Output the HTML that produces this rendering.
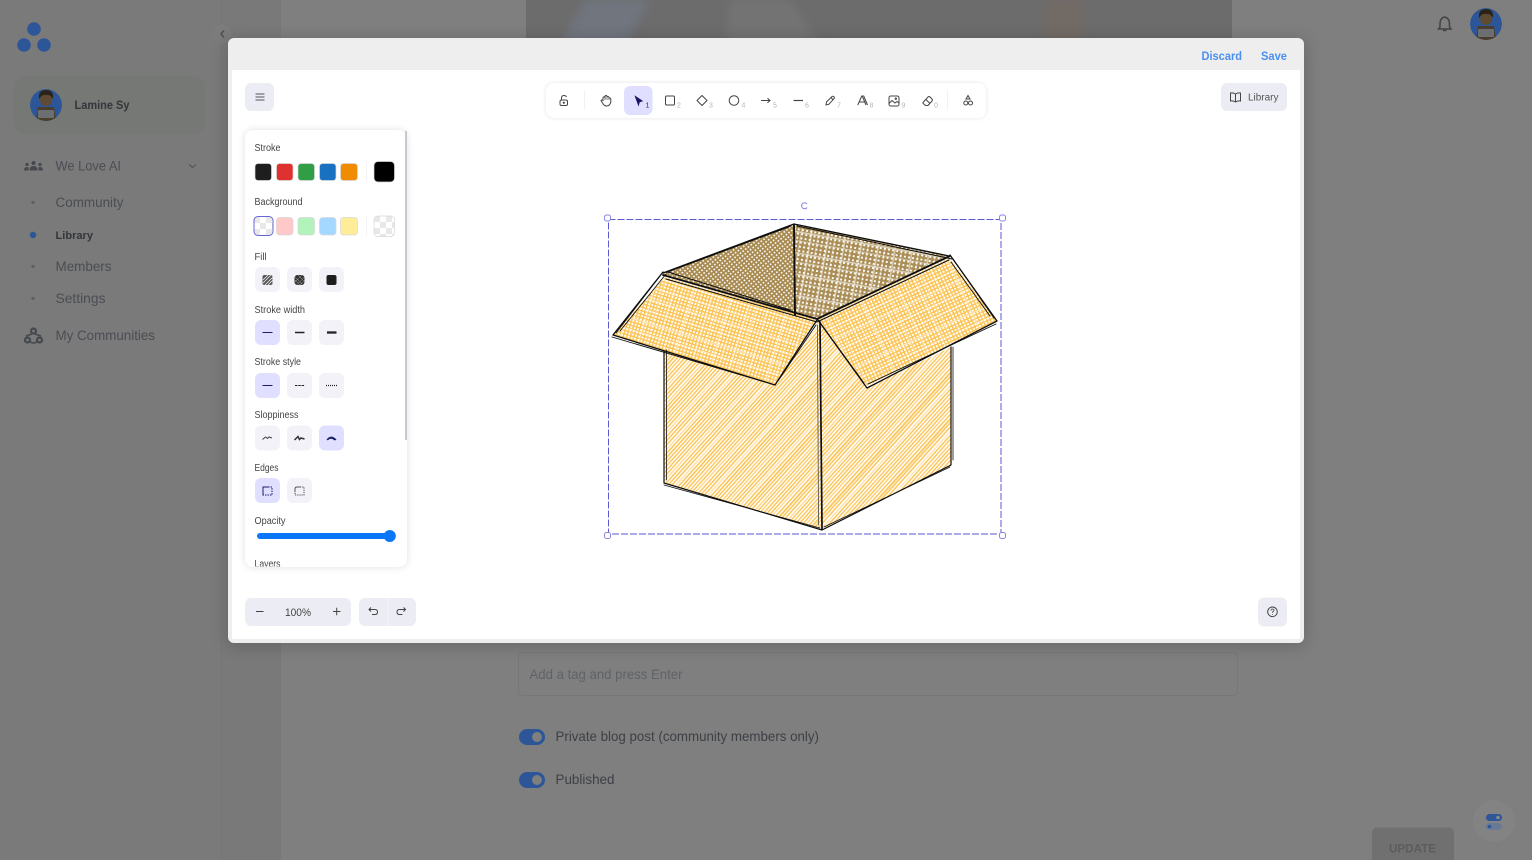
<!DOCTYPE html>
<html lang="en">
<head>
<meta charset="utf-8">
<title>Library</title>
<style>
html,body{margin:0;padding:0;width:1532px;height:860px;overflow:hidden;background:#7f7f7f}
svg{display:block;position:absolute;left:0;top:0}
text{font-family:"Liberation Sans",sans-serif}
</style>
</head>
<body>
<svg width="1532" height="860" viewBox="0 0 1532 860" xmlns="http://www.w3.org/2000/svg">
<defs>
<filter id="b4" x="-50%" y="-50%" width="200%" height="200%"><feGaussianBlur stdDeviation="4"/></filter>
<filter id="b8" x="-5%" y="-5%" width="110%" height="110%"><feGaussianBlur stdDeviation="8"/></filter>
<filter id="b2" x="-5%" y="-30%" width="110%" height="160%"><feGaussianBlur stdDeviation="2.5"/></filter>
<pattern id="hSide" width="2.8" height="2.8" patternUnits="userSpaceOnUse" patternTransform="rotate(-48)">
<rect width="2.8" height="2.8" fill="#fff"/><rect width="2.8" height="1.5" fill="#fcc65c"/>
</pattern>
<pattern id="hStreak" width="31" height="31" patternUnits="userSpaceOnUse" patternTransform="rotate(-48)">
<rect y="2" width="31" height="1.2" fill="#fff" opacity=".8"/><rect y="9" width="31" height="2" fill="#fff" opacity=".45"/><rect y="20" width="31" height="1.2" fill="#fff" opacity=".7"/><rect y="26" width="31" height="1" fill="#f9b93e" opacity=".5"/>
</pattern>
<pattern id="hFlapL" width="3.4" height="3.4" patternUnits="userSpaceOnUse" patternTransform="rotate(17)">
<rect width="3.4" height="3.4" fill="#fff"/><rect width="3.4" height="1.5" fill="#fcc455"/><rect width="1.5" height="3.4" fill="#fcc455"/>
</pattern>
<pattern id="hFlapR" width="3.4" height="3.4" patternUnits="userSpaceOnUse" patternTransform="rotate(-25)">
<rect width="3.4" height="3.4" fill="#fff"/><rect width="3.4" height="1.5" fill="#fcc455"/><rect width="1.5" height="3.4" fill="#fcc455"/>
</pattern>
<pattern id="xStreakL" width="19" height="23" patternUnits="userSpaceOnUse" patternTransform="rotate(17)">
<rect y="4" width="19" height="1.2" fill="#fff" opacity=".55"/><rect y="15" width="19" height="1.6" fill="#fff" opacity=".4"/><rect x="7" width="1.2" height="23" fill="#fff" opacity=".5"/><rect x="15" width="1" height="23" fill="#fff" opacity=".35"/>
</pattern>
<pattern id="xStreakR" width="19" height="23" patternUnits="userSpaceOnUse" patternTransform="rotate(-25)">
<rect y="4" width="19" height="1.2" fill="#fff" opacity=".55"/><rect y="15" width="19" height="1.6" fill="#fff" opacity=".4"/><rect x="7" width="1.2" height="23" fill="#fff" opacity=".5"/><rect x="15" width="1" height="23" fill="#fff" opacity=".35"/>
</pattern>
<pattern id="hBrownL" width="3.4" height="3.4" patternUnits="userSpaceOnUse" patternTransform="rotate(-38)">
<rect width="3.4" height="3.4" fill="#fff"/><rect width="3.4" height="1.8" fill="#a88a50"/><rect width="1.8" height="3.4" fill="#a88a50"/>
</pattern>
<pattern id="hBrownR" width="4.2" height="4.2" patternUnits="userSpaceOnUse" patternTransform="rotate(10)">
<rect width="4.2" height="4.2" fill="#fff"/><rect width="4.2" height="2.3" fill="#ab8e56"/><rect width="2.3" height="4.2" fill="#ab8e56"/>
</pattern>
<pattern id="xStreakB" width="17" height="21" patternUnits="userSpaceOnUse" patternTransform="rotate(10)">
<rect y="5" width="17" height="1.6" fill="#fff" opacity=".55"/><rect y="14" width="17" height="1.2" fill="#fff" opacity=".4"/><rect x="6" width="1.6" height="21" fill="#fff" opacity=".5"/><rect x="13" width="1.2" height="21" fill="#fff" opacity=".35"/>
</pattern>
<pattern id="chk" width="12" height="12" patternUnits="userSpaceOnUse" x="374" y="216">
<rect width="12" height="12" fill="#fff"/><rect width="6" height="6" fill="#e8e8e8"/><rect x="6" y="6" width="6" height="6" fill="#e8e8e8"/>
</pattern>
<pattern id="chk2" width="12" height="12" patternUnits="userSpaceOnUse" x="254" y="217">
<rect width="12" height="12" fill="#fff"/><rect width="6" height="6" fill="#e8e8e8"/><rect x="6" y="6" width="6" height="6" fill="#e8e8e8"/>
</pattern>
<clipPath id="c1"><circle cx="46" cy="105" r="16"/></clipPath>
<clipPath id="c2"><circle cx="1486" cy="24" r="16"/></clipPath>
<clipPath id="pc"><rect x="245" y="130" width="162" height="436.500"/></clipPath>
</defs>

<!-- dimmed page -->
<rect width="1532" height="860" fill="#7f7f7f"/>
<rect x="0" y="0" width="221" height="860" fill="#7a7a7a"/>
<rect x="221" y="0" width="60" height="860" fill="#797979"/>
<rect x="221" width="1" height="860" fill="#767676"/>

<!-- blurred cover -->
<rect x="526" y="0" width="706" height="45" fill="#6c6c6c"/>
<path d="M560 45 L585 0 L650 0 L625 45Z" fill="#70757e" filter="url(#b4)"/>
<path d="M725 45 L730 0 L790 0 L820 45Z" fill="#737373" filter="url(#b4)"/>
<rect x="1045" y="0" width="38" height="45" fill="#726b65" filter="url(#b4)"/>

<!-- logo -->
<circle cx="34" cy="29" r="6.8" fill="#2c5698"/>
<circle cx="24" cy="45" r="6.8" fill="#2c5698"/>
<circle cx="44" cy="45" r="6.8" fill="#2c5698"/>

<!-- collapse -->
<circle cx="222" cy="34" r="9.5" fill="#7c7c7c"/>
<path d="M224 30.5 L221 34 L224 37.5" fill="none" stroke="#4f4f4f" stroke-width="1.400"/>

<!-- user card -->
<rect x="14" y="76" width="191" height="58" rx="12" fill="#757875"/>
<g clip-path="url(#c1)">
<circle cx="46" cy="105" r="16" fill="#2c5698"/>
<path d="M36 121 L38 107 H54 L56 121Z" fill="#4a3d2c"/>
<circle cx="46" cy="100" r="6" fill="#5f4b32"/>
<path d="M39 99 Q38 90 46 90 Q54 90 53 99 Q50 94 46 95 Q42 94 39 99Z" fill="#2b2318"/>
<rect x="38" y="110" width="16" height="8" rx="1" fill="#6c6e72"/>
</g>
<text x="74.500" y="109" font-size="11.500" font-weight="700" fill="#33363a" textLength="55" lengthAdjust="spacingAndGlyphs">Lamine Sy</text>

<!-- nav -->
<g fill="#45484d">
<circle cx="33.500" cy="163" r="2"/><circle cx="27" cy="164.500" r="1.600"/><circle cx="40" cy="164.500" r="1.600"/>
<path d="M29.500 170.500 Q29.500 166 33.500 166 Q37.500 166 37.500 170.500Z"/><path d="M24 170.500 Q24 167 27 167 Q28.500 167 28.800 168 L28.300 170.500Z"/><path d="M43 170.500 Q43 167 40 167 Q38.500 167 38.200 168 L38.700 170.500Z"/>
</g>
<text x="55.500" y="170.500" font-size="14" fill="#4a4d53" textLength="65.500" lengthAdjust="spacingAndGlyphs">We Love AI</text>
<path d="M189 164.500 L192.500 167.500 L196 164.500" fill="none" stroke="#4d5056" stroke-width="1"/>
<circle cx="33" cy="202.500" r="1.700" fill="#5f6165"/>
<text x="55.500" y="207" font-size="14" fill="#4a4d53" textLength="68" lengthAdjust="spacingAndGlyphs">Community</text>
<circle cx="33" cy="235" r="3.200" fill="#2c5698"/>
<text x="55.500" y="239" font-size="11.200" font-weight="700" fill="#33363a" textLength="37.500" lengthAdjust="spacingAndGlyphs">Library</text>
<circle cx="33" cy="266.500" r="1.700" fill="#5f6165"/>
<text x="55.500" y="271" font-size="14" fill="#4a4d53" textLength="56" lengthAdjust="spacingAndGlyphs">Members</text>
<circle cx="33" cy="298.500" r="1.700" fill="#5f6165"/>
<text x="55.500" y="303" font-size="14" fill="#4a4d53" textLength="50" lengthAdjust="spacingAndGlyphs">Settings</text>
<g fill="none" stroke="#45484d" stroke-width="2.200">
<circle cx="33.500" cy="331" r="2.500"/><circle cx="27.500" cy="340" r="2.500"/><circle cx="39.500" cy="340" r="2.500"/>
<path d="M32 334 L26 336 M35 334 L41 336 M30 342 Q33.500 344 37 342" stroke-width="1.500"/>
</g>
<text x="55.500" y="340" font-size="14" fill="#4a4d53" textLength="99.500" lengthAdjust="spacingAndGlyphs">My Communities</text>

<!-- header right -->
<path d="M1444.500 17 Q1449.500 18 1449.500 24 L1449.500 27 L1451 29 H1438.500 L1440 27 V24 Q1440 18 1444.500 17Z" fill="none" stroke="#444" stroke-width="1.500"/>
<path d="M1443 30.500 H1446.500" stroke="#444" stroke-width="1.500"/>
<g clip-path="url(#c2)">
<circle cx="1486" cy="24" r="16" fill="#2c5698"/>
<path d="M1476 40 L1478 26 H1494 L1496 40Z" fill="#4a3d2c"/>
<circle cx="1486" cy="19" r="6" fill="#5f4b32"/>
<path d="M1479 18 Q1478 9 1486 9 Q1494 9 1493 18 Q1490 13 1486 14 Q1482 13 1479 18Z" fill="#2b2318"/>
<rect x="1478" y="29" width="16" height="8" rx="1" fill="#6c6e72"/>
</g>

<!-- lower content -->
<rect x="518.500" y="652.500" width="719" height="43" rx="4" fill="none" stroke="#777" stroke-width="1"/>
<text x="529.500" y="679" font-size="14" fill="#5f6266" textLength="153" lengthAdjust="spacingAndGlyphs">Add a tag and press Enter</text>
<rect x="519" y="729" width="26" height="16" rx="8" fill="#2c5698"/>
<circle cx="537" cy="737" r="5" fill="#7f7f7f"/>
<text x="555.500" y="741" font-size="14" fill="#3d4045" textLength="263.500" lengthAdjust="spacingAndGlyphs">Private blog post (community members only)</text>
<rect x="519" y="772" width="26" height="16" rx="8" fill="#2c5698"/>
<circle cx="537" cy="780" r="5" fill="#7f7f7f"/>
<text x="555.500" y="784" font-size="14" fill="#3d4045" textLength="59" lengthAdjust="spacingAndGlyphs">Published</text>
<rect x="1372" y="827.500" width="82" height="40" rx="5" fill="#707070"/>
<text x="1389" y="852.500" font-size="12" font-weight="700" fill="#5c5c5c" textLength="47" lengthAdjust="spacingAndGlyphs">UPDATE</text>
<circle cx="1494" cy="821" r="21" fill="#838383"/>
<rect x="1486" y="814" width="16" height="7" rx="3.500" fill="#2c5698"/>
<circle cx="1498" cy="817.500" r="1.800" fill="#8a8a8a"/>
<rect x="1486" y="823" width="16" height="7" rx="3.500" fill="#6a7a94"/>
<circle cx="1489.500" cy="826.500" r="1.800" fill="#2c5698"/>

<!-- modal -->
<rect x="226" y="38" width="1080" height="609" rx="8" fill="#000" opacity=".16" filter="url(#b8)"/>
<rect x="228" y="38" width="1076" height="605" rx="6" fill="#eeeeee"/>
<rect x="232" y="70" width="1068" height="569" fill="#ffffff"/>
<text x="1201.500" y="60" font-size="11.500" font-weight="700" fill="#4a8ff0" textLength="40.500" lengthAdjust="spacingAndGlyphs">Discard</text>
<text x="1261" y="60" font-size="11.500" font-weight="700" fill="#4a8ff0" textLength="26" lengthAdjust="spacingAndGlyphs">Save</text>

<!-- hamburger -->
<rect x="245" y="83" width="29" height="28" rx="6" fill="#ececf4"/>
<path d="M255.500 94 H264.500 M255.500 97 H264.500 M255.500 100 H264.500" stroke="#55555b" stroke-width="1"/>

<!-- library -->
<rect x="1221" y="83" width="66" height="28" rx="6" fill="#ececf4"/>
<path d="M1235.500 94 Q1233 92.500 1230.500 93 V101 Q1233 100.500 1235.500 102 Q1238 100.500 1240.500 101 V93 Q1238 92.500 1235.500 94 V102" fill="none" stroke="#444" stroke-width="1"/>
<text x="1248" y="100.500" font-size="10" fill="#555" textLength="30.500" lengthAdjust="spacingAndGlyphs">Library</text>

<!-- toolbar -->
<rect x="546" y="83" width="440" height="35" rx="8" fill="#000" opacity=".1" filter="url(#b2)"/>
<rect x="546" y="83" width="440" height="35" rx="8" fill="#fff"/>
<rect x="584" y="90" width="1" height="20" fill="#f2f2f2"/>
<rect x="947" y="90" width="1" height="20" fill="#f2f2f2"/>
<rect x="624" y="86" width="28.500" height="29" rx="6" fill="#e0dfff"/>
<g fill="none" stroke="#444" stroke-width="1">
<rect x="560" y="100" width="7.500" height="5.500" rx="1.500"/><path d="M561.500 100 V98 Q561.500 95.500 564 95.500 Q566 95.500 566.500 97"/><circle cx="563.800" cy="102.700" r=".6"/>
<path d="M603 100 V97.500 Q604 96 605 97.500 V96 Q606 95 607 96 V96.800 Q608.300 96 609 97.300 V98 Q610.500 97.500 610.800 99 V102 Q610 106 606.500 106 Q604 106 602.500 103 L601 100.500 Q602 99 603.500 101"/>
<path d="M605 97 V100 M607 96 V100 M609 97 V100" stroke-width=".7"/>
<rect x="665.500" y="96" width="9" height="9" rx="1.200" stroke-width="1"/>
<path d="M702 95.500 L707 100.500 L702 105.500 L697 100.500Z" stroke-width="1" stroke-linejoin="round"/>
<circle cx="734" cy="100.500" r="4.800" stroke-width="1"/>
<path d="M761 100.500 H770 M767.500 98.300 L770 100.500 L767.500 102.700" stroke-width="1"/>
<path d="M793.500 100.500 H803" stroke-width="1.200"/>
<path d="M826 105 L826.500 102 L832 96.500 Q833 95.800 834 96.800 Q834.800 97.800 834 98.700 L828.800 104.300Z M831 97.500 L833 99.700"/>
<rect x="889" y="96" width="10" height="10" rx="1.800"/><path d="M889 103.500 L892 100.500 L895 103 L897 101.500 L899 103"/><circle cx="895.800" cy="98.700" r=".7"/>
<path d="M923 102.500 L928 97 Q929 96 930 97 L932 99 Q932.800 100 932 101 L928 105.500 H925.500 L923 103.300Z M926 99.500 L930 103.500"/>
<path d="M968 95.500 L970 99 H966Z"/><circle cx="965.800" cy="103" r="2"/><circle cx="970.500" cy="103" r="2"/>
</g>
<path d="M635 96 L642.500 101 L639.500 102 L638.500 105.500Z" fill="#1b1464" stroke="#1b1464" stroke-width=".6"/>
<path d="M862 95.500 L857.800 105 M862 95.500 L866 105 M859 102 H865 M863.500 95.500 L867.500 105" fill="none" stroke="#444" stroke-width="1"/>
<g font-size="7" fill="#b5b5b5">
<text x="645.500" y="107.500" fill="#333">1</text>
<text x="677" y="107.500">2</text><text x="709" y="107.500">3</text><text x="741.500" y="107.500">4</text>
<text x="773" y="107.500">5</text><text x="805" y="107.500">6</text><text x="837" y="107.500">7</text>
<text x="869.500" y="107.500">8</text><text x="901.500" y="107.500">9</text><text x="934" y="107.500">0</text>
</g>

<!-- properties panel -->
<rect x="245" y="130" width="162" height="437" rx="8" fill="#000" opacity=".12" filter="url(#b4)"/>
<rect x="245" y="130" width="162" height="437" rx="8" fill="#fff"/>
<rect x="405" y="131" width="2" height="309" fill="#c8c8d0"/>
<g font-size="10" fill="#444" clip-path="url(#pc)">
<text x="254.500" y="151" textLength="26" lengthAdjust="spacingAndGlyphs">Stroke</text>
<text x="254.500" y="205" textLength="48" lengthAdjust="spacingAndGlyphs">Background</text>
<text x="254.500" y="260" textLength="12" lengthAdjust="spacingAndGlyphs">Fill</text>
<text x="254.500" y="313" textLength="50.500" lengthAdjust="spacingAndGlyphs">Stroke width</text>
<text x="254.500" y="365" textLength="46.500" lengthAdjust="spacingAndGlyphs">Stroke style</text>
<text x="254.500" y="418" textLength="44" lengthAdjust="spacingAndGlyphs">Sloppiness</text>
<text x="254.500" y="471" textLength="24" lengthAdjust="spacingAndGlyphs">Edges</text>
<text x="254.500" y="524" textLength="31" lengthAdjust="spacingAndGlyphs">Opacity</text>
<text x="254.500" y="567" textLength="26" lengthAdjust="spacingAndGlyphs">Layers</text>
</g>

<!-- stroke swatches -->
<g stroke="#d8d8d8" stroke-width=".7">
<rect x="255" y="163.500" width="16.500" height="17" rx="3" fill="#1e1e1e"/>
<rect x="276.500" y="163.500" width="16.500" height="17" rx="3" fill="#e03131"/>
<rect x="298" y="163.500" width="16.500" height="17" rx="3" fill="#2f9e44"/>
<rect x="319.500" y="163.500" width="16.500" height="17" rx="3" fill="#1971c2"/>
<rect x="340.500" y="163.500" width="17" height="17" rx="3" fill="#f08c00"/>
<rect x="374" y="161.500" width="20.500" height="20.500" rx="4" fill="#000"/>
<rect x="276.500" y="217.500" width="16.500" height="17.500" rx="3" fill="#ffc9c9"/>
<rect x="298" y="217.500" width="16.500" height="17.500" rx="3" fill="#b2f2bb"/>
<rect x="319.500" y="217.500" width="16.500" height="17.500" rx="3" fill="#a5d8ff"/>
<rect x="340.500" y="217.500" width="17" height="17.500" rx="3" fill="#ffec99"/>
<rect x="374" y="216" width="20.500" height="20.500" rx="4" fill="url(#chk)"/>
</g>
<rect x="254" y="216.500" width="19" height="19" rx="4" fill="url(#chk2)" stroke="#6965db" stroke-width="1"/>
<rect x="366" y="161" width="1" height="21" fill="#f5f5f5"/>
<rect x="366" y="216" width="1" height="21" fill="#f5f5f5"/>

<!-- button rows -->
<g fill="#f3f2f8">
<rect x="255" y="267" width="25" height="25" rx="6"/><rect x="287" y="267" width="25" height="25" rx="6"/><rect x="319" y="267" width="25" height="25" rx="6"/>
<rect x="255" y="320" width="25" height="25" rx="6" fill="#e0dfff"/><rect x="287" y="320" width="25" height="25" rx="6"/><rect x="319" y="320" width="25" height="25" rx="6"/>
<rect x="255" y="373" width="25" height="25" rx="6" fill="#e0dfff"/><rect x="287" y="373" width="25" height="25" rx="6"/><rect x="319" y="373" width="25" height="25" rx="6"/>
<rect x="255" y="425.500" width="25" height="25" rx="6"/><rect x="287" y="425.500" width="25" height="25" rx="6"/><rect x="319" y="425.500" width="25" height="25" rx="6" fill="#e0dfff"/>
<rect x="255" y="478" width="25" height="25" rx="6" fill="#e0dfff"/><rect x="287" y="478" width="25" height="25" rx="6"/>
</g>
<!-- fill icons -->
<rect x="262.500" y="275" width="10" height="10" rx="2" fill="#555"/>
<path d="M263 280 L268 275 M263 283 L271 275 M265 285 L272.500 277.500 M268 285 L272.500 280.500" stroke="#f3f2f8" stroke-width=".8"/>
<rect x="294.500" y="275" width="10" height="10" rx="3" fill="#333"/>
<path d="M295 277 L302 284 M295 280 L300 285 M298 275 L304.500 281.500 M304.500 277 L297 284.500 M302 275 L295 282 M304.500 280 L300 285" stroke="#aaa" stroke-width=".5"/>
<rect x="326.500" y="275" width="10" height="10" rx="2" fill="#1e1e1e"/>
<!-- widths -->
<path d="M262.500 332.500 H272.500" stroke="#1b1f6b" stroke-width="1"/>
<path d="M295 332.500 H304.500" stroke="#222" stroke-width="1.500"/>
<path d="M327 332.500 H336.500" stroke="#222" stroke-width="2.300"/>
<!-- styles -->
<path d="M262.500 385.500 H272.500" stroke="#1b1f6b" stroke-width="1"/>
<path d="M295 385.500 H304.500" stroke="#222" stroke-width="1" stroke-dasharray="2.500 .8"/>
<path d="M326 385.500 H337" stroke="#222" stroke-width="1.200" stroke-dasharray="1 1"/>
<!-- sloppiness -->
<path d="M262.500 439.500 L265.500 437 L267.500 438.500 L269 437 L272 438" fill="none" stroke="#444" stroke-width="1"/>
<path d="M294.500 440 L298 436.500 L299.500 439.500 L301 438 L304.500 439" fill="none" stroke="#333" stroke-width="1.500"/>
<path d="M327 440 Q331 434.500 336 440 M328 439.500 Q331 436.500 335 440" fill="none" stroke="#1b1f6b" stroke-width="1.300"/>
<!-- edges -->
<rect x="263" y="487" width="9" height="8" fill="none" stroke="#1b1f6b" stroke-width="1" stroke-dasharray="1.500 1"/>
<path d="M263 495 V487 H268" fill="none" stroke="#1b1f6b" stroke-width="1"/>
<path d="M295 492 V489 Q295 487 297 487 H300" fill="none" stroke="#555" stroke-width="1"/>
<path d="M300 487 H304 V495 H295 V492" fill="none" stroke="#555" stroke-width="1" stroke-dasharray="1.200 1"/>
<!-- slider -->
<rect x="257" y="533" width="138" height="6" rx="3" fill="#0b76f7"/>
<circle cx="389.800" cy="536" r="6" fill="#0b76f7"/>

<!-- bottom controls -->
<rect x="245" y="598" width="106" height="28" rx="6" fill="#ececf4"/>
<rect x="359" y="598" width="57" height="28" rx="6" fill="#ececf4"/>
<rect x="387.500" y="598" width="1" height="28" fill="#f4f4f8"/>
<path d="M256 611.500 H263.500 M333 611.500 H340.500 M336.700 607.700 V615.300" stroke="#444" stroke-width="1"/>
<text x="285" y="616" font-size="11" fill="#444" textLength="26" lengthAdjust="spacingAndGlyphs">100%</text>
<path d="M369 609.500 H375 Q377.500 609.500 377.500 612 Q377.500 614.500 375 614.500 H372 M371 607.500 L369 609.500 L371 611.500" fill="none" stroke="#444" stroke-width="1"/>
<path d="M405.500 609.500 H399.500 Q397 609.500 397 612 Q397 614.500 399.500 614.500 H402.500 M403.500 607.500 L405.500 609.500 L403.500 611.500" fill="none" stroke="#444" stroke-width="1"/>
<rect x="1258" y="597.500" width="29" height="29" rx="6" fill="#ececf4"/>
<circle cx="1272.500" cy="611.800" r="4.800" fill="none" stroke="#444" stroke-width="1"/>
<path d="M1271 610.500 Q1271 609 1272.500 609 Q1274 609 1274 610.300 Q1274 611.200 1272.500 612 V612.800 M1272.500 614 V614.800" fill="none" stroke="#444" stroke-width=".8"/>

<!-- sketch: fills -->
<path d="M664 350 L664 483 L822 529 L820 320 L775 384 L664 350Z" fill="url(#hSide)"/>
<path d="M664 350 L664 483 L822 529 L820 320 L775 384 L664 350Z" fill="url(#hStreak)"/>
<path d="M820 320 L822 529 L951 465 L951 347 L867 388Z" fill="url(#hSide)"/>
<path d="M820 320 L822 529 L951 465 L951 347 L867 388Z" fill="url(#hStreak)"/>
<path d="M663 274 L794 224 L795 314Z" fill="url(#hBrownL)"/>
<path d="M794 224 L950 256 L817 319 L795 314Z" fill="url(#hBrownR)"/>
<path d="M794 224 L950 256 L817 319 L795 314Z" fill="url(#xStreakB)"/>
<path d="M665 277 L817 320 L775 384 L613 335Z" fill="url(#hFlapL)"/>
<path d="M665 277 L817 320 L775 384 L613 335Z" fill="url(#xStreakL)"/>
<path d="M817 320 L949 258 L997 321 L867 386Z" fill="url(#hFlapR)"/>
<path d="M817 320 L949 258 L997 321 L867 386Z" fill="url(#xStreakR)"/>

<!-- sketch: strokes -->
<g fill="none" stroke="#0e0e0e" stroke-linejoin="round" stroke-linecap="round">
<path d="M663 273 L794 224 L949 256" stroke-width="1.400"/>
<path d="M666 272.500 L790 226.500 M797 226 L952 259" stroke-width="1"/>
<path d="M794 225 L795 315" stroke-width="1.900"/>
<path d="M663 275 L817 319 L950 256" stroke-width="1.800"/>
<path d="M666 279 L817 322 L949 260 M668 272 L790 310" stroke-width="1"/>
<path d="M663 272 L613 335 L775 385 L817 320" stroke-width="1.300"/>
<path d="M660 276 L616 333 M612 337 L772 384 M778 381 L816 325 M666 274 L620 331" stroke-width=".9"/>
<path d="M950 255 L997 321 L867 388 L818 320" stroke-width="1.300"/>
<path d="M953 259 L994 318 M996 324 L868 384 M864 383 L821 324 M951 262 L990 316" stroke-width=".9"/>
<path d="M664 351 L664 483 L822 530 L951 465 L951 347" stroke-width="1.200"/>
<path d="M666.500 350 L666.500 480 M664 485 L820 528 M824 527 L950 467 M953 347 L953 460" stroke-width=".8"/>
<path d="M820 322 L822 529" stroke-width="1.700"/>
<path d="M817.500 325 L818.500 525" stroke-width=".8" stroke="#444"/>
</g>

<!-- selection -->
<rect x="608.500" y="219.500" width="392.500" height="314.500" fill="none" stroke="#5e5ad2" stroke-width="1" stroke-dasharray="7 2"/>
<g fill="#fff" stroke="#8a87e4" stroke-width="1">
<rect x="604.500" y="215" width="6" height="6" rx="2"/>
<rect x="999.500" y="215" width="6" height="6" rx="2"/>
<rect x="604.500" y="532.500" width="6" height="6" rx="2"/>
<rect x="999.500" y="532.500" width="6" height="6" rx="2"/>
<path d="M807 204 A3 3 0 1 0 807 207.500" fill="none" stroke-width="1.100"/>
</g>
</svg>
</body>
</html>
